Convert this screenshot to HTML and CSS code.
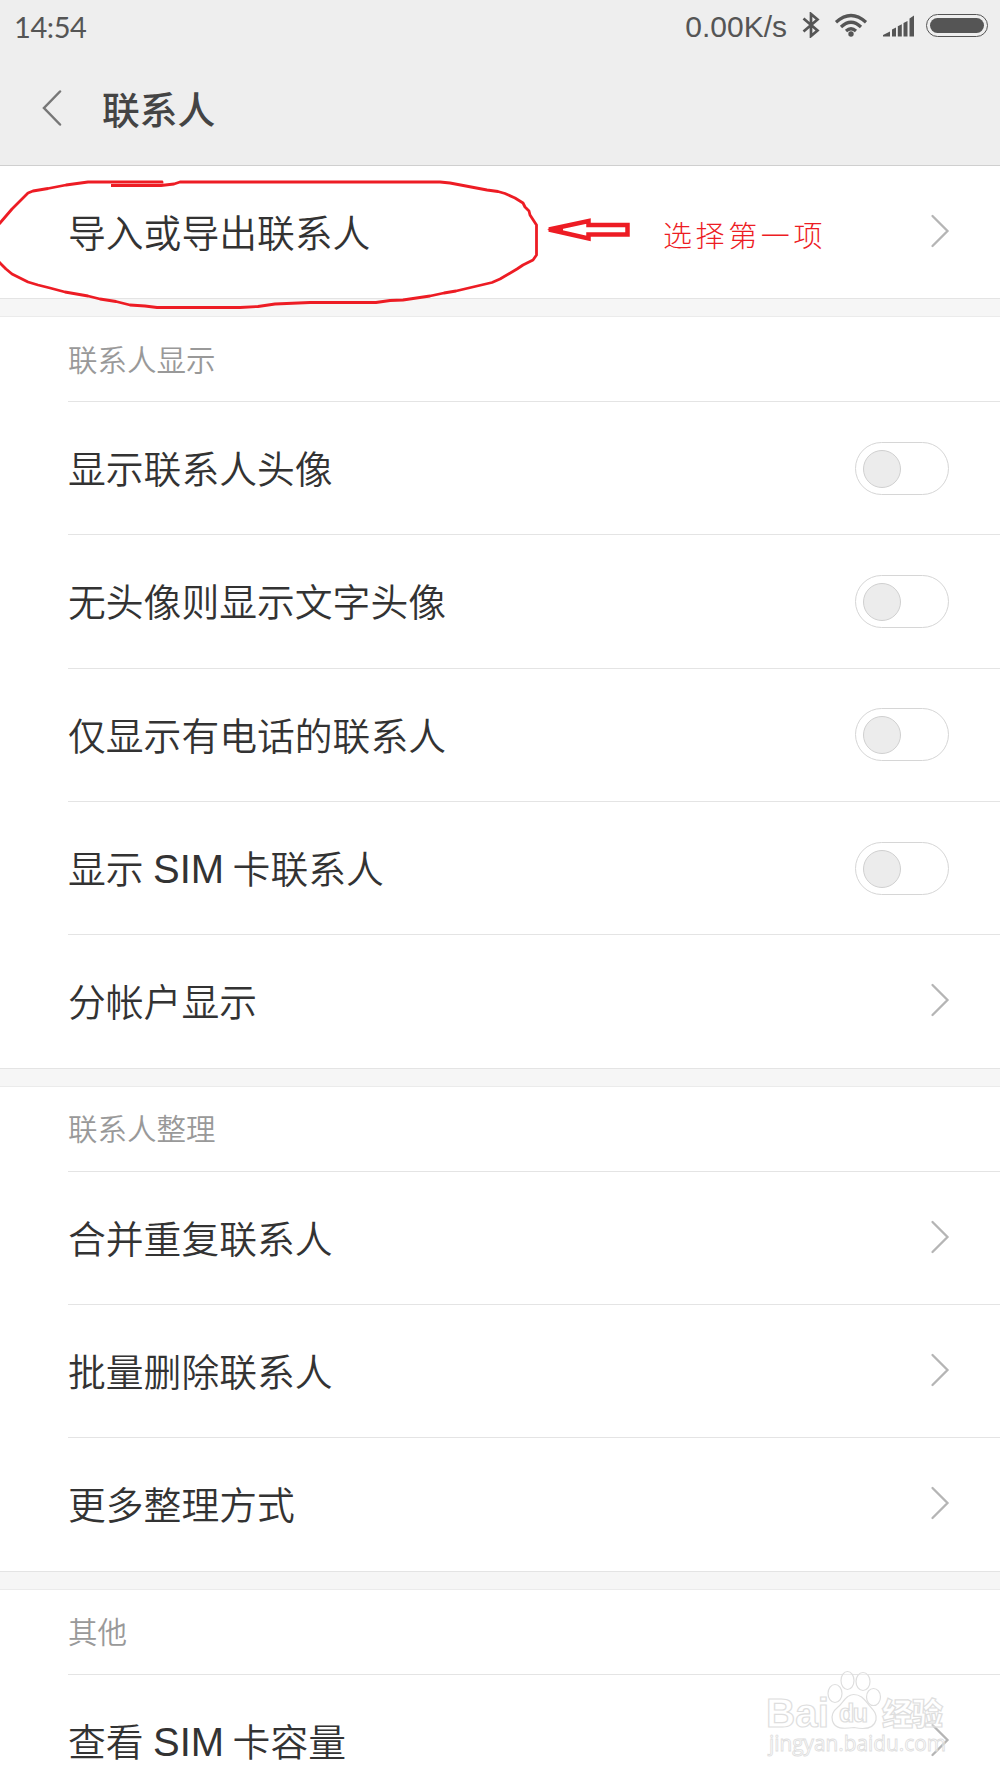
FILE: index.html
```html
<!DOCTYPE html>
<html lang="zh-CN">
<head>
<meta charset="UTF-8">
<meta name="viewport" content="width=device-width, initial-scale=1.0">
<title>联系人</title>
<link rel="stylesheet" href="styles.css">
</head>
<body>
<svg class="defs" width="0" height="0" aria-hidden="true">
  <symbol id="chevron" viewBox="0 0 20 34"><path d="M2.5 2 17.5 17 2.5 32"/></symbol>
</svg>

<div class="screen">
  <header class="top">
    <div class="status">
      <span class="time">14:54</span>
      <span class="speed">0.00K/s</span>
      <svg class="bluetooth" viewBox="0 0 18 26" width="18" height="26"><path d="M1.5 6.5 15.5 18.5 9 24V2l6.500 5.500L1.500 19.500"/></svg>
      <svg class="wifi" viewBox="0 0 34 24" width="34" height="24">
        <path d="M2 9.300Q17-4.300 32 9.300M7 14Q17 4.500 27 14M12 18Q17 13.500 22 18"/>
        <circle cx="17" cy="21" r="2.700"/>
      </svg>
      <svg class="signal" viewBox="0 0 32 22" width="32" height="22"><path d="M0 21.500v-1.500l7-3.500v5zM9 14.500l4-2v9h-4zM14.800 11.300l4-2v12.200h-4zM20.500 8l4-2v15.500h-4zM26.500 3.500l4.500-3v21h-4.500z"/></svg>
      <span class="battery"></span>
    </div>
    <div class="titlebar">
      <svg class="back" viewBox="0 0 20 36" width="20" height="36"><path d="M18 1.500 2 18 18 34.500"/></svg>
      <h1>联系人</h1>
    </div>
  </header>

  <section class="group">
    <div class="row"><span>导入或导出联系人</span><svg class="chevron"><use href="#chevron"/></svg></div>
  </section>

  <section class="group">
    <h2>联系人显示</h2>
    <div class="row"><span>显示联系人头像</span><i class="switch"></i></div>
    <div class="row"><span>无头像则显示文字头像</span><i class="switch"></i></div>
    <div class="row"><span>仅显示有电话的联系人</span><i class="switch"></i></div>
    <div class="row"><span>显示 <b>SIM</b> 卡联系人</span><i class="switch"></i></div>
    <div class="row"><span>分帐户显示</span><svg class="chevron"><use href="#chevron"/></svg></div>
  </section>

  <section class="group">
    <h2>联系人整理</h2>
    <div class="row"><span>合并重复联系人</span><svg class="chevron"><use href="#chevron"/></svg></div>
    <div class="row"><span>批量删除联系人</span><svg class="chevron"><use href="#chevron"/></svg></div>
    <div class="row"><span>更多整理方式</span><svg class="chevron"><use href="#chevron"/></svg></div>
  </section>

  <section class="group">
    <h2>其他</h2>
    <div class="row"><span>查看 <b>SIM</b> 卡容量</span><svg class="chevron"><use href="#chevron"/></svg></div>
  </section>

  <!-- hand-drawn marks over the first row -->
  <svg class="marks" viewBox="0 0 640 160" width="640" height="160">
    <path class="pen" d="M162 23.500V22H88L66 25 48 28.500 33 31 28 33 18 43 12 49 0 63-3 67"/>
    <path class="pen" d="M-3 99 0 103 6 109 12 114 28 122 38 125 50 128 65 132 88 136 100 139 116 141.500 130 145 145 146 157 147.500H240L258 146.500 275 144 310 142.500H376L390 140.500 403 140 430 136 444 133 456 131 492 122.500 500 119 517 109 523 105 533 100 536.500 95V65L530 55 529 51 525 47 523 43 515 38 505 33.500 498 31.500 487 30 450 23 440 22H180L174 24 161 25.500H111"/>
    <path class="arrow" d="M549 69.500 588.500 61V65H627.500V74.500H588.500V78.500Z"/>
    <path class="tip" d="M547 69.500 563 65.500V73.500Z"/>
  </svg>
  <p class="note">选择第一项</p>

  <svg class="watermark" viewBox="0 0 200 100" width="200" height="100">
    <text class="latin" x="4" y="57" font-size="40" textLength="63" lengthAdjust="spacingAndGlyphs">Bai</text>
    <text class="cjk" x="120" y="55" font-size="31" textLength="61">经验</text>
    <ellipse cx="73" cy="23.500" rx="7" ry="9"/>
    <ellipse cx="85.500" cy="10.500" rx="6.500" ry="9"/>
    <ellipse cx="101" cy="11.500" rx="7" ry="9"/>
    <ellipse cx="111.500" cy="27" rx="7" ry="8.500"/>
    <path d="M91.500 24.500C84 24.500 81 33 76 37 71 41 69 46 70.500 51 73 59 81 59 92 57.500 102 59.500 112 58.500 114 50 115.500 43 110 39 106 34 102 29 99 24.500 91.500 24.500Z"/>
    <text class="du" x="77" y="52" font-size="25" textLength="29">du</text>
    <text class="url" x="7" y="81" font-size="22" textLength="177" lengthAdjust="spacingAndGlyphs">jingyan.baidu.com</text>
  </svg>
</div>
</body>
</html>
```
FILE: styles.css
```css
:root {
  --bar: #eeeeee;
  --line: #e4e4e4;
  --ink: #333333;
  --ink-soft: #999999;
  --status: #555555;
  --red: #ed1c24;
}
* { box-sizing: border-box; }
html, body {
  margin: 0;
  padding: 0;
  background: #f6f6f6;
  font-family: "Noto Sans CJK SC", sans-serif;
  color: var(--ink);
}
.defs { position: absolute; }
.screen {
  position: relative;
  width: 1000px;
  height: 1778px;
  overflow: hidden;
}
svg path { fill: none; }

/* header */
.top {
  height: 166px;
  background: var(--bar);
  border-bottom: 1px solid #cfcfcf;
}
.status {
  display: flex;
  align-items: center;
  height: 50px;
  padding: 0 12px 0 14px;
  color: var(--status);
}
.time {
  font: 29px/1 Lato, sans-serif;
  letter-spacing: -0.4px;
  margin-right: auto;
  padding-top: 2px;
}
.speed {
  font: 30px/1 "Liberation Sans", sans-serif;
  padding-top: 3px;
}
.bluetooth { margin-left: 15px; }
.bluetooth path { stroke: var(--status); stroke-width: 2.7; }
.wifi { margin-left: 14px; }
.wifi path { stroke: var(--status); stroke-width: 3.2; }
.wifi circle { fill: var(--status); }
.signal { margin: 2px 11px 0 15px; }
.signal path { fill: var(--status); }
.battery {
  width: 62px;
  height: 23px;
  border: 1.500px solid var(--status);
  border-radius: 12px;
  padding: 3px;
}
.battery::before {
  content: "";
  display: block;
  height: 100%;
  border-radius: 8px;
  background: var(--status);
}
.titlebar {
  display: flex;
  align-items: center;
  gap: 40px;
  height: 115px;
  padding-left: 42px;
}
.back path { stroke: #777777; stroke-width: 2.5; stroke-linecap: round; }
h1 {
  margin: 0;
  font-size: 37.8px;
  font-weight: 500;
  line-height: 1;
  color: #444444;
}

/* list */
.group {
  background: #ffffff;
  border-bottom: 1px solid var(--line);
  margin-bottom: 17px;
  padding-left: 68px;
}
.group + .group { border-top: 1px solid #ebebeb; }
h2 {
  display: flex;
  align-items: center;
  height: 84px;
  margin: 0;
  padding-bottom: 3px;
  font-size: 29.5px;
  font-weight: 350;
  color: var(--ink-soft);
}
.row {
  display: flex;
  align-items: center;
  justify-content: space-between;
  height: 133.33px;
  padding: 0 50px 2px 0;
  font-size: 37.8px;
  font-weight: 350;
  line-height: 40px;
}
.group:first-of-type .row { height: 132px; padding-bottom: 3px; }
h2 + .row, .row + .row { border-top: 1px solid var(--line); }
.row b {
  font: 40px/0 "Liberation Sans", sans-serif;
  margin-left: 1px;
}
.chevron {
  width: 20px;
  height: 34px;
  stroke: #b5b5b5;
  stroke-width: 2.3;
  stroke-linecap: round;
}
.switch {
  position: relative;
  top: 1px;
  width: 94px;
  height: 53px;
  margin-right: 1px;
  border: 1.500px solid #d6d6d6;
  border-radius: 27px;
  padding: 7px;
}
.switch::before {
  content: "";
  display: block;
  width: 36px;
  height: 36px;
  border: 1px solid #d0d0d0;
  border-radius: 50%;
  background: #ececec;
}

/* overlays */
.marks {
  position: absolute;
  left: 0;
  top: 160px;
}
.pen { stroke: var(--red); stroke-width: 2.8; stroke-linejoin: round; }
.arrow { stroke: var(--red); stroke-width: 4.5; }
.marks .tip { fill: var(--red); }
.note {
  position: absolute;
  left: 663px;
  top: 218px;
  margin: 0;
  font-size: 29px;
  font-weight: 300;
  line-height: 32px;
  letter-spacing: 3.6px;
  color: var(--red);
}
.watermark {
  position: absolute;
  left: 762px;
  top: 1670px;
}
.watermark text, .watermark ellipse, .watermark path {
  fill: #ffffff;
  fill-opacity: 0.35;
  stroke: #dedede;
  stroke-width: 1.2;
}
.watermark .latin, .watermark .du { font-family: "Liberation Sans", sans-serif; font-weight: 700; }
.watermark .cjk { font-weight: 900; }
.watermark .url { font-family: "Open Sans", sans-serif; stroke-width: 0.9; }
```
